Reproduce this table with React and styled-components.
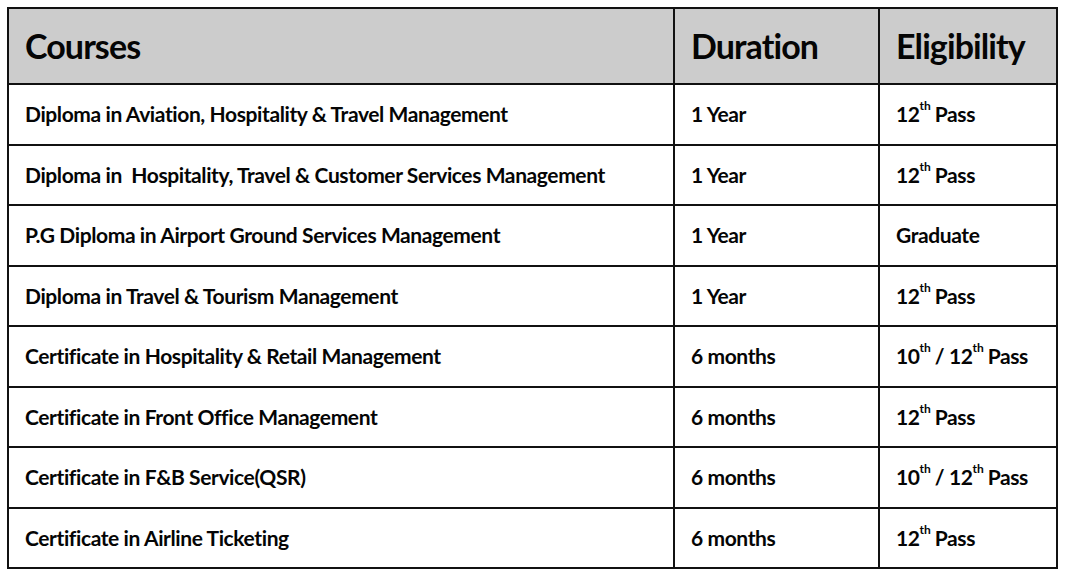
import React from "react";
import styled, { createGlobalStyle } from "styled-components";

const Global = createGlobalStyle`
  html, body { margin: 0; padding: 0; background: #ffffff; }
  body {
    font-family: Lato, "Liberation Sans", sans-serif;
  }
`;

const Page = styled.div`
  width: 1067px;
  height: 580px;
  padding: 7px 0 0 7px;
  box-sizing: border-box;
`;

const Table = styled.table`
  border-collapse: collapse;
  width: 1049px;
  table-layout: fixed;
  color: #050505;
`;

const HeadCell = styled.th`
  background: #cccccc;
  border: 2px solid #111111;
  height: 76px;
  padding: 0 0 2px 16px;
  text-align: left;
  vertical-align: middle;
  font-size: 34px;
  font-weight: 700;
  letter-spacing: -0.9px;
  width: ${(p) => p.$w}px;
  box-sizing: border-box;
`;

const Cell = styled.td`
  border: 2px solid #111111;
  height: 60.5px;
  padding: 0 0 1px 16px;
  text-align: left;
  vertical-align: middle;
  font-size: 21px;
  font-weight: 700;
  letter-spacing: -0.4px;
  white-space: nowrap;
  box-sizing: border-box;
`;

const Sup = styled.sup`
  font-size: 12px;
  letter-spacing: 0;
  vertical-align: top;
  position: relative;
  top: -3px;
  margin-right: 4px;
`;

const Ord = ({ n }) => (
  <>
    {n}
    <Sup>th</Sup>
  </>
);

const rows = [
  ["Diploma in Aviation, Hospitality & Travel Management", "1 Year", <><Ord n="12" />Pass</>],
  ["Diploma in\u00a0 Hospitality, Travel & Customer Services Management", "1 Year", <><Ord n="12" />Pass</>],
  ["P.G Diploma in Airport Ground Services Management", "1 Year", "Graduate"],
  ["Diploma in Travel & Tourism Management", "1 Year", <><Ord n="12" />Pass</>],
  ["Certificate in Hospitality & Retail Management", "6 months", <><Ord n="10" />/ <Ord n="12" />Pass</>],
  ["Certificate in Front Office Management", "6 months", <><Ord n="12" />Pass</>],
  ["Certificate in F&B Service(QSR)", "6 months", <><Ord n="10" />/ <Ord n="12" />Pass</>],
  ["Certificate in Airline Ticketing", "6 months", <><Ord n="12" />Pass</>],
];

export default function App() {
  return (
    <Page>
      <Global />
      <Table>
        <thead>
          <tr>
            <HeadCell $w={666}>Courses</HeadCell>
            <HeadCell $w={205}>Duration</HeadCell>
            <HeadCell $w={178}>Eligibility</HeadCell>
          </tr>
        </thead>
        <tbody>
          {rows.map((r, i) => (
            <tr key={i}>
              <Cell>{r[0]}</Cell>
              <Cell>{r[1]}</Cell>
              <Cell>{r[2]}</Cell>
            </tr>
          ))}
        </tbody>
      </Table>
    </Page>
  );
}
